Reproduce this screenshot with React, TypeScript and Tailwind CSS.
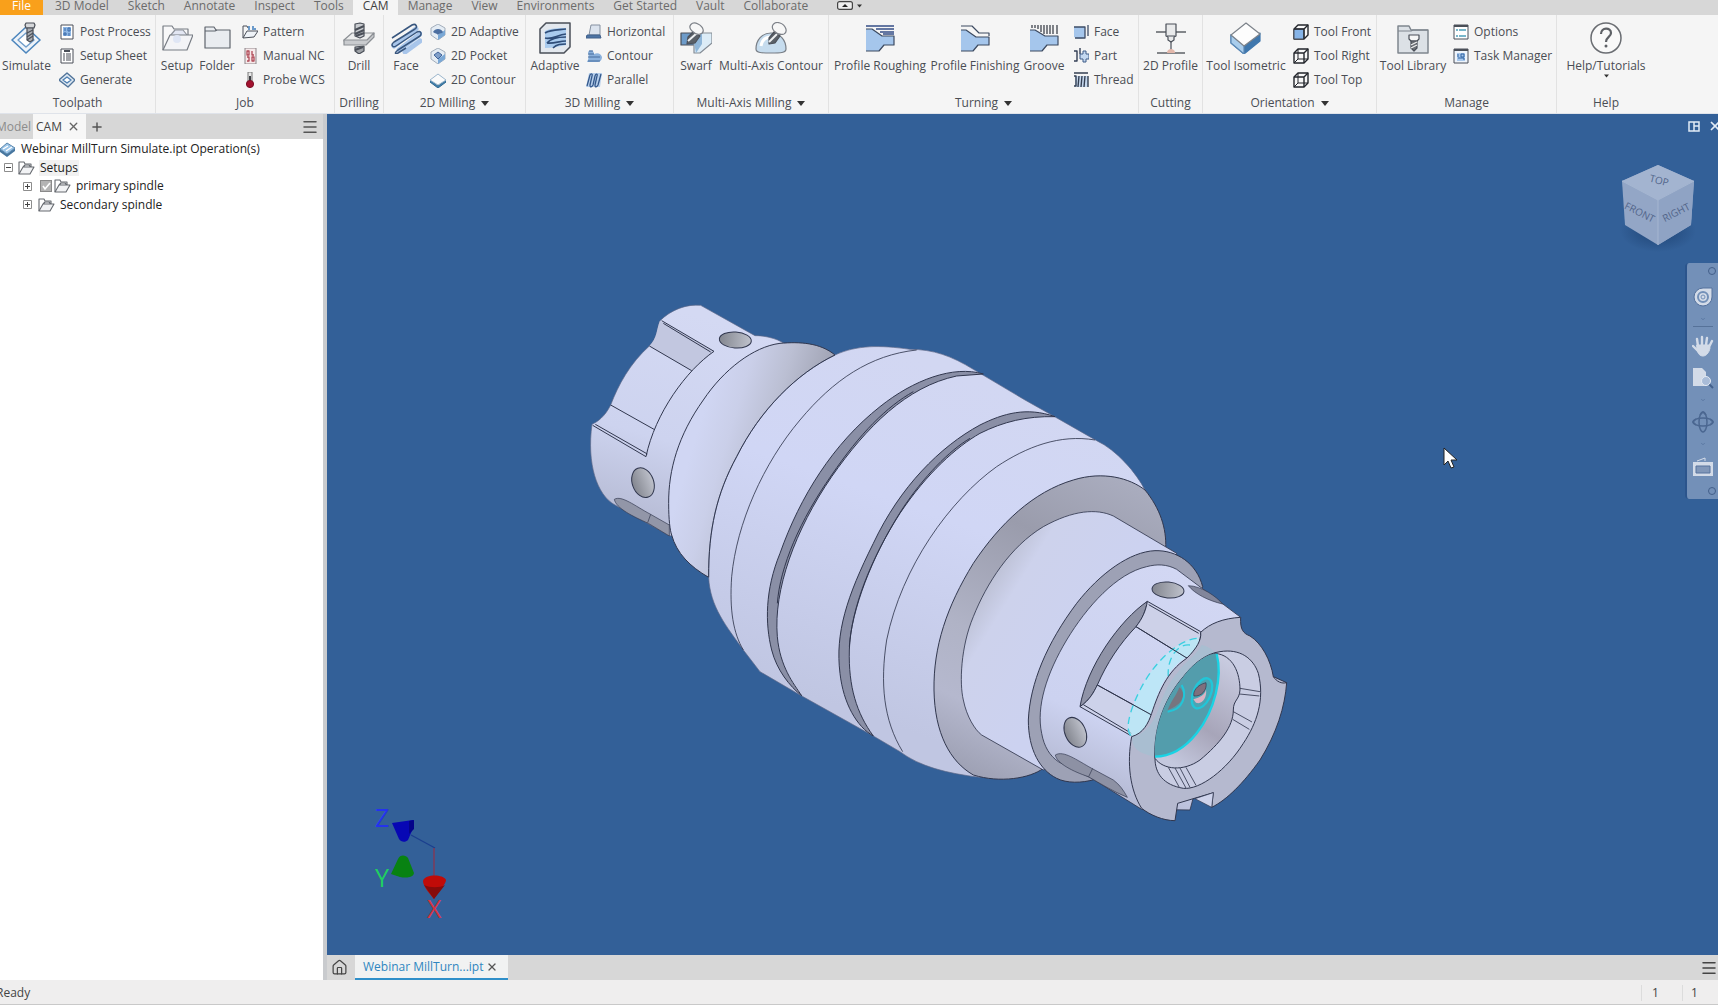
import type { ReactNode } from "react";
import { ChevronDown, House, Menu, Plus, X } from "lucide-react";

const INK = "#4a4f58";

const tabsBefore = ["3D Model", "Sketch", "Annotate", "Inspect", "Tools"];
const tabsAfter = ["Manage", "View", "Environments", "Get Started", "Vault", "Collaborate"];

/* ---------- icon frames ---------- */

function Big({ children }: { children: ReactNode }) {
  return (
    <svg width="32" height="32" viewBox="0 0 32 32" fill="none" stroke={INK} strokeWidth="1.2" strokeLinejoin="round" aria-hidden="true">
      {children}
    </svg>
  );
}

function Small({ children }: { children: ReactNode }) {
  return (
    <svg className="shrink-0" width="16" height="16" viewBox="0 0 16 16" fill="none" stroke={INK} strokeLinejoin="round" aria-hidden="true">
      {children}
    </svg>
  );
}

/* ---------- large icons ---------- */

const SimulateIcon = () => (
  <Big>
    <path d="M15 5 29 18 15 31 1 18Z" fill="#eef3f9" stroke="#4d86bd" strokeWidth="1.6" />
    <path d="M15 11 23 18 15 25 7 18Z" fill="#fff" stroke="#6f9dca" strokeWidth="1.4" />
    <path d="M15 1h8l1 2-1 3h-8l-1-3Z" fill="#d5d7da" />
    <path d="M16 6h6v12l-3 2-3-2Z" fill="#a9adb3" />
    <path d="m16 11 6-3m-6 7 6-4m-6 7 6-4" />
  </Big>
);

const SetupIcon = () => (
  <Big>
    <path d="M2 28V4h9l2 3h14v6" fill="#f8f8f9" stroke="#777c84" />
    <path d="M9 14l5-6h8l4 5v6H13Z" fill="#e3e7f3" stroke="#8f949c" />
    <path d="M2 28 9 13h23l-6 15Z" fill="#f3f4f7" stroke="#777c84" />
    <circle cx="16" cy="17" r="4" fill="#dfe6f5" stroke="none" />
  </Big>
);

const FolderIcon = () => (
  <Big>
    <path d="M4 26V5h9l2 3h14v18Z" fill="#e9ecf0" stroke="#5f646d" />
    <path d="M4 9h10l2-1" stroke="#5f646d" />
  </Big>
);

const DrillIcon = () => (
  <Big>
    <path d="M12 25v4l4 3 5-3v-5Z" fill="#9fa3a8" />
    <path d="M1 18 9 11h22l-7 8H1Z" fill="#eceded" stroke="#8b8f94" />
    <path d="M1 18v5h22l8-8v-4l-7 7Z" fill="#c9cbce" stroke="#8b8f94" />
    <path d="M12 2l5-1 4 1v12l-4 2-5-2Z" fill="#c9ccd0" />
    <path d="m12 8 9-4m-9 8 9-4m-8 6 8-3m-9 17 8-3" strokeWidth="2" />
  </Big>
);

const FaceIcon = () => (
  <Big>
    <path d="M4 24 26 7M9 28l21-16M15 30l15-11" stroke="#a8c5ea" strokeWidth="5" strokeLinecap="round" />
    <path d="M2 16 22 3c4-2 6 2 3 4L4 20c-4 3-1 6 2 4L27 10c4-2 5 2 3 4L8 28c-4 3-3 4 0 3l8-5" stroke="#39577f" strokeWidth="1.5" />
  </Big>
);

const AdaptiveIcon = () => (
  <Big>
    <path d="M7 1h24v24l-6 6H1V7Z" fill="#e3e8ee" strokeWidth="1.5" />
    <path d="M6 9c6-3 14-3 21-3v17c-6 1-14 3-21 3Z" fill="#a9cbee" stroke="none" />
    <path d="M6 11c6-4 14-3 21-4M6 16c7 2 12-3 21-4M8 21c4-5 11-6 19-6M8 21c7 1 12-2 19-2M14 26c4-4 8-4 13-4" stroke="#2f4d78" strokeWidth="1.7" />
  </Big>
);

const SwarfIcon = () => (
  <Big>
    <path d="M1 11h12l5 5-3 7H1Z" fill="#6d9bc9" />
    <path d="m14 20 8-9h10v10L20 31h-6Z" fill="#dcecf7" stroke="#858d96" />
    <path d="m14 20 8-9v11l-6 9Z" fill="#8fb6d9" stroke="none" />
    <path d="m8 15 6-6 6 5-5 7-8 1Z" fill="#5a6068" />
    <path d="m8 19 9-8" stroke="#eef0f2" strokeWidth="2" />
    <path d="M12 9C7 4 12-1 18 2s7 9 2 10c-3 1-5 0-8-3Z" fill="#f7f7f7" stroke="#7d8188" />
  </Big>
);

const MultiContourIcon = () => (
  <Big>
    <path d="M1 27c0-9 6-16 15-16s15 7 15 16c0 4-6 4-15 4S1 31 1 27Z" fill="#c6dcee" stroke="#777d85" />
    <path d="M6 24c1-6 5-9 10-9" stroke="#fff" strokeWidth="3" />
    <path d="m14 16 5-6 6 4-5 7-6 1Z" fill="#5a6068" />
    <path d="m14 20 8-8" stroke="#eef0f2" strokeWidth="2" />
    <path d="M19 9c-4-5 0-10 6-8s8 9 4 11c-3 1-7 0-10-3Z" fill="#f7f7f7" stroke="#7d8188" />
  </Big>
);

const RoughingIcon = () => (
  <Big>
    <path d="M2 7h6l10 7h12v9H20l-5 6H2Z" fill="#a5c6ec" stroke="none" />
    <path d="M2 7h6l10 7h12v9H20l-5 6H2" stroke="#3c4a60" />
    <path d="M2 4h28M12 7h18M16 10h14M19 12h11" stroke="#344e86" strokeWidth="1.4" />
  </Big>
);

const FinishingIcon = () => (
  <Big>
    <path d="M2 8h5l10 7h13v8H19l-5 6H2Z" fill="#a5c6ec" stroke="none" />
    <path d="M2 8h5l10 7h13v8H19l-5 6H2" stroke="#3c4a60" />
    <path d="M2 4h11l7 7h10v3" stroke="#3c4a60" />
  </Big>
);

const GrooveIcon = () => (
  <Big>
    <path d="M2 8h5l10 6h13v9H19l-5 6H2Z" fill="#a5c6ec" stroke="none" />
    <path d="M2 8h5l10 6h13v9H19l-5 6H2" stroke="#3c4a60" />
    <path d="M4 3v3M7 3v3M10 3v4M13 3v7M16 3v9M19 3v9M22 3v9M25 3v9M29 3v9" stroke="#3f444d" strokeWidth="1.3" />
  </Big>
);

const ProfileCutIcon = () => (
  <Big>
    <path d="M1 10h10m10 0h10M2 31h28" stroke="#5d6167" strokeWidth="1.5" />
    <path d="M11 2h10v12l-2 1v3l-3 2-3-2v-3l-2-1Z" fill="#e9eaeb" />
    <path d="M12 14h8M16 20v11" />
    <path d="M12 31c0-3 2-4 4-4s4 1 4 4" stroke="none" fill="#e3b8ab" />
  </Big>
);

const IsoIcon = () => (
  <Big>
    <path d="M1 13v8l13 11 16-13v-8L14 24Z" fill="#3f77ad" stroke="#3f77ad" />
    <path d="M1 13v8l13 11v-9Z" fill="#a9cdec" stroke="#5b88b5" />
    <path d="M16 1 30 12 14 24 1 13Z" fill="#fdfdfd" stroke="#7c828a" />
  </Big>
);

const LibraryIcon = () => (
  <Big>
    <path d="M1 31V4h11l2 4h17v23Z" fill="#dce1e6" stroke="#7f868e" strokeWidth="1.5" />
    <path d="M1 9h13l2-1h15" stroke="#7f868e" />
    <path d="M12 13h10v4l-2 2h-6l-2-2Z" fill="#f6f6f6" />
    <path d="M14 19h6v7l-3 3-3-3Z" fill="#6c7076" />
    <path d="m14 23 6-3m-6 6 6-3" stroke="#eee" />
  </Big>
);

const HelpIcon = () => (
  <Big>
    <circle cx="16" cy="16" r="15" fill="#f9f9f9" stroke="#6a6d72" strokeWidth="1.5" />
    <path d="M11 12c0-7 10-7 10-1 0 4-5 4-5 9" stroke="#5e6166" strokeWidth="2.2" />
    <circle cx="16" cy="24" r="1.5" fill="#5e6166" stroke="none" />
  </Big>
);

/* ---------- small icons ---------- */

const PostIcon = () => (
  <Small>
    <path d="M2 1h12v14H2Z" fill="#fff" />
    <path d="M4 3h8v9H4Z" fill="#8db6e4" stroke="none" />
    <path d="M6 4v3M9 4h2v3H9ZM5 9h2v2H5ZM10 9v3" stroke="#3868a8" />
  </Small>
);
const SheetIcon = () => (
  <Small>
    <path d="M2 1h12v14H2Z" fill="#fff" />
    <path d="M5 3h6" strokeWidth="2" />
    <path d="M4 6h2m1 0h5M4 8h2m1 0h5M4 10h2m1 0h5M4 12h2m1 0h5" />
  </Small>
);
const GenerateIcon = () => (
  <Small>
    <path d="M8 1 16 8 9 15 0 8Z" fill="#dfe9f2" stroke="#52759b" strokeWidth="1.4" />
    <path d="m8 5 4 3-4 3-4-3Z" fill="#fff" stroke="#4e7fb2" strokeWidth="1.4" />
  </Small>
);
const PatternIcon = () => (
  <Small>
    <path d="M1 14V2h4l1 2" />
    <path d="M1 14 5 7h11l-4 6Z" fill="#eef2f7" />
    <path d="M6 3h2m2 0h2M6 5h2m2 0h4" stroke="#3f7dbd" strokeWidth="1.5" />
  </Small>
);
const ManualIcon = () => (
  <Small>
    <path d="M3 0h11v16H3Z" fill="#f6e9ea" stroke="#8d8589" />
    <path d="M5 3h2v4H5ZM10 3v4h2M5 9h2v4H5M10 9h2v4h-2Z" stroke="#b04a56" strokeWidth="1.3" />
  </Small>
);
const ProbeIcon = () => (
  <Small>
    <path d="M6 0h4v10H6Z" fill="#e8e8e8" stroke="#777" />
    <path d="M8 4v8" stroke="#3d3f44" strokeWidth="2" />
    <circle cx="8" cy="12" r="3.6" fill="#a3122f" stroke="#7d1026" />
  </Small>
);
const Pocket = ({ adaptive }: { adaptive?: boolean }) => (
  <Small>
    <path d="M8 0 15 4v7l-7 5-7-5V4Z" fill="#e4ecf4" stroke="#a3aebb" />
    <path d="M8 16v-5l7-5v5Z" fill="#7aa8d6" stroke="none" />
    {adaptive ? (
      <path d="M3 8c2-4 8-4 10 0-1 2-4 1-5 3-1-2-3-1-5-3Z" fill="#4b6ea0" stroke="none" />
    ) : (
      <path d="m8 4 4 3-4 4-4-4Z" fill="#7f9fca" stroke="#41649a" />
    )}
  </Small>
);
const Contour2DIcon = () => (
  <Small>
    <path d="M0 8v2l8 6 8-6V8l-8 6Z" fill="#3d83b4" stroke="#33678d" />
    <path d="m8 2 8 6-8 5-8-5Z" fill="#fafafa" stroke="#9bb6cc" />
  </Small>
);
const HorizontalIcon = () => (
  <Small>
    <path d="M5 1h9v10H3Z" fill="#dbe3ee" stroke="#8590a0" />
    <path d="M1 11h13l1 3H0Z" fill="#4d74a5" stroke="#41618b" />
  </Small>
);
const Contour3DIcon = () => (
  <Small>
    <path d="M2 4c3-3 6-1 6 2 4-2 7 0 8 3 0 3-2 5-5 5H1c2-3 2-7 1-10Z" fill="#8bb1dc" stroke="none" />
    <path d="M3 3h4M2 6h6M2 9h12M2 13h12" stroke="#476d9d" />
  </Small>
);
const ParallelIcon = () => (
  <Small>
    <path d="M3 1h13l-2 14H0Z" fill="#b8d0ec" stroke="none" />
    <path d="M1 14 4 3c1-2 3-1 2 1L4 13c0 3 2 2 3 0L9 4c1-3 3-2 2 0L9 13c0 3 2 2 3 0l3-11" stroke="#35598c" strokeWidth="1.3" />
  </Small>
);
const TurnFaceIcon = () => (
  <Small>
    <path d="M1 3h11v10c-4 2-7 2-11 0Z" fill="#a5c6ec" stroke="none" />
    <path d="M1 3h11v11H2M15 1v11" stroke="#3d4c66" strokeWidth="1.3" />
  </Small>
);
const PartIcon = () => (
  <Small>
    <path d="M1 3h3v10H1M7 0v6" stroke="#333f55" strokeWidth="1.4" />
    <path d="M7 6h3V3h3v3h3v5h-3v3h-3v-3H7Z" fill="#c4d8f0" stroke="#3f5d88" />
  </Small>
);
const ThreadIcon = () => (
  <Small>
    <path d="M2 4h13v11H2Z" fill="#c6d8ee" stroke="none" />
    <path d="M1 1h14M1 4h2v10H1M6 4l-1 11M9 4 8 15M12 4l-1 11M15 4v11" stroke="#343f52" strokeWidth="1.4" />
  </Small>
);
const CubeIcon = ({ face }: { face: "front" | "right" | "top" }) => (
  <Small>
    <path d="M1 5 5 1h10v10l-4 4H1Z" fill="#f8f8f8" stroke="#22252b" strokeWidth="1.4" />
    {face === "front" && <path d="M1 5h10v10H1Z" fill="#86b4e8" />}
    {face !== "front" && <path d="M5 1v10h10M5 11l-4 4" stroke="#22252b" />}
    <path d="M1 5h10v10M11 5l4-4" stroke="#22252b" strokeWidth="1.4" />
  </Small>
);
const OptionsIcon = () => (
  <Small>
    <path d="M1 1h14v14H1Z" fill="#fff" />
    <path d="M1 2h14" strokeWidth="2" />
    <path d="M3 6h2m1 0h7M3 12h2m1 0h7" stroke="#4da0bb" strokeWidth="1.4" />
  </Small>
);
const TaskIcon = () => (
  <Small>
    <path d="M1 1h14v14H1Z" fill="#eef4fb" />
    <path d="M1 2h14" strokeWidth="2" />
    <path d="M4 5h8v8H4Z" fill="#a8c8ec" stroke="none" />
    <path d="M5 6v3M8 6h3v3H8ZM5 10h6v2" stroke="#2f62a2" />
  </Small>
);

/* ---------- ribbon ---------- */

function Caret({ small }: { small?: boolean }) {
  return (
    <svg width={small ? 5 : 8} height={small ? 4 : 5} viewBox="0 0 8 5" aria-hidden="true">
      <path d="M0 0h8L4 5Z" fill="#333" />
    </svg>
  );
}

function LargeButton({ icon, label, width, menu }: { icon: ReactNode; label: string; width: string; menu?: boolean }) {
  return (
    <button type="button" className={`${width} flex shrink-0 flex-col items-center pt-[7px]`}>
      {icon}
      <span className="mt-1 leading-4 whitespace-nowrap">{label}</span>
      {menu && <Caret small />}
    </button>
  );
}

function SmallButton({ icon, label }: { icon: ReactNode; label: string }) {
  return (
    <button type="button" className="flex h-6 items-center gap-[5px] whitespace-nowrap">
      {icon}
      {label}
    </button>
  );
}

function Group({ label, width, menu, children }: { label: string; width: string; menu?: boolean; children: ReactNode }) {
  return (
    <section aria-label={label} className={`${width} flex shrink-0 flex-col border-r border-[#e2e2e2]`}>
      <div className="flex flex-1 items-start">{children}</div>
      <div className="mb-0.5 flex h-4 items-center justify-center gap-1.5 whitespace-nowrap">
        {label}
        {menu && <Caret />}
      </div>
    </section>
  );
}

function Ribbon() {
  return (
    <div className="flex h-[99px] shrink-0 border-b border-[#dfe3ea] bg-[#f5f5f5] text-[#4a4d54]">
      <Group label="Toolpath" width="w-[156px]">
        <LargeButton icon={<SimulateIcon />} label="Simulate" width="w-[53px]" />
        <div className="ml-1.5 pt-[5px]">
          <SmallButton icon={<PostIcon />} label="Post Process" />
          <SmallButton icon={<SheetIcon />} label="Setup Sheet" />
          <SmallButton icon={<GenerateIcon />} label="Generate" />
        </div>
      </Group>
      <Group label="Job" width="w-[179px]">
        <LargeButton icon={<SetupIcon />} label="Setup" width="w-[42px]" />
        <LargeButton icon={<FolderIcon />} label="Folder" width="w-[38px]" />
        <div className="ml-1.5 pt-[5px]">
          <SmallButton icon={<PatternIcon />} label="Pattern" />
          <SmallButton icon={<ManualIcon />} label="Manual NC" />
          <SmallButton icon={<ProbeIcon />} label="Probe WCS" />
        </div>
      </Group>
      <Group label="Drilling" width="w-[49px]">
        <LargeButton icon={<DrillIcon />} label="Drill" width="w-12" />
      </Group>
      <Group label="2D Milling" width="w-[142px]" menu>
        <LargeButton icon={<FaceIcon />} label="Face" width="w-11" />
        <div className="ml-0.5 pt-[5px]">
          <SmallButton icon={<Pocket adaptive />} label="2D Adaptive" />
          <SmallButton icon={<Pocket />} label="2D Pocket" />
          <SmallButton icon={<Contour2DIcon />} label="2D Contour" />
        </div>
      </Group>
      <Group label="3D Milling" width="w-[148px]" menu>
        <LargeButton icon={<AdaptiveIcon />} label="Adaptive" width="w-[58px]" />
        <div className="ml-0.5 pt-[5px]">
          <SmallButton icon={<HorizontalIcon />} label="Horizontal" />
          <SmallButton icon={<Contour3DIcon />} label="Contour" />
          <SmallButton icon={<ParallelIcon />} label="Parallel" />
        </div>
      </Group>
      <Group label="Multi-Axis Milling" width="w-[155px]" menu>
        <LargeButton icon={<SwarfIcon />} label="Swarf" width="w-11" />
        <LargeButton icon={<MultiContourIcon />} label="Multi-Axis Contour" width="w-[106px]" />
      </Group>
      <Group label="Turning" width="w-[310px]" menu>
        <LargeButton icon={<RoughingIcon />} label="Profile Roughing" width="w-[102px]" />
        <LargeButton icon={<FinishingIcon />} label="Profile Finishing" width="w-[88px]" />
        <LargeButton icon={<GrooveIcon />} label="Groove" width="w-[50px]" />
        <div className="ml-1 pt-[5px]">
          <SmallButton icon={<TurnFaceIcon />} label="Face" />
          <SmallButton icon={<PartIcon />} label="Part" />
          <SmallButton icon={<ThreadIcon />} label="Thread" />
        </div>
      </Group>
      <Group label="Cutting" width="w-16">
        <LargeButton icon={<ProfileCutIcon />} label="2D Profile" width="w-[63px]" />
      </Group>
      <Group label="Orientation" width="w-[174px]" menu>
        <LargeButton icon={<IsoIcon />} label="Tool Isometric" width="w-[86px]" />
        <div className="ml-1 pt-[5px]">
          <SmallButton icon={<CubeIcon face="front" />} label="Tool Front" />
          <SmallButton icon={<CubeIcon face="right" />} label="Tool Right" />
          <SmallButton icon={<CubeIcon face="top" />} label="Tool Top" />
        </div>
      </Group>
      <Group label="Manage" width="w-[180px]">
        <LargeButton icon={<LibraryIcon />} label="Tool Library" width="w-[72px]" />
        <div className="ml-1 pt-[5px]">
          <SmallButton icon={<OptionsIcon />} label="Options" />
          <SmallButton icon={<TaskIcon />} label="Task Manager" />
        </div>
      </Group>
      <section aria-label="Help" className="flex w-[98px] shrink-0 flex-col">
        <div className="flex flex-1 items-start">
          <LargeButton icon={<HelpIcon />} label="Help/Tutorials" width="w-[98px]" menu />
        </div>
        <div className="mb-0.5 h-4 text-center">Help</div>
      </section>
    </div>
  );
}

function TabBar() {
  const tab = "flex items-center pr-[9px] pl-2.5 pb-1 whitespace-nowrap";
  return (
    <nav className="flex h-[15px] shrink-0 bg-[#d7d7d7] leading-[10px] text-[#6b6b6b]">
      <button type="button" className="mr-0.5 flex w-[43px] items-center justify-center bg-[#f9a01b] pb-1 text-white">File</button>
      {tabsBefore.map((t) => (
        <button key={t} type="button" className={tab}>{t}</button>
      ))}
      <button type="button" className={`${tab} bg-[#f5f5f5] text-[#3f3f3f]`}>CAM</button>
      {tabsAfter.map((t) => (
        <button key={t} type="button" className={tab}>{t}</button>
      ))}
      <button type="button" aria-label="Ribbon display" className="ml-5 flex items-center gap-1 pb-1">
        <svg width="16" height="9" viewBox="0 0 16 9" aria-hidden="true">
          <rect x=".6" y=".6" width="14.8" height="7.8" rx="2" fill="#eee" stroke="#444" strokeWidth="1.2" />
          <path d="M5 6h6L8 3Z" fill="#222" />
        </svg>
        <Caret small />
      </button>
    </nav>
  );
}

/* ---------- browser panel ---------- */

function Expander({ open }: { open?: boolean }) {
  return (
    <svg width="9" height="9" viewBox="0 0 9 9" fill="#fff" stroke="#8d8d8d" aria-hidden="true">
      <path d="M.5.5h8v8h-8Z" />
      <path d={open ? "M2 4.5h5" : "M2 4.5h5M4.5 2v5"} stroke="#444" />
    </svg>
  );
}

function OpenFolder() {
  return (
    <svg width="17" height="14" viewBox="0 0 17 14" fill="none" stroke="#666a70" strokeWidth="1.1" strokeLinejoin="round" aria-hidden="true">
      <path d="M1 13V1h5l1 2h6v3" />
      <path d="M1 13 5 6h11l-4 7ZM5 6l2-2h4l2 2" fill="#f2f3f5" />
    </svg>
  );
}

function BrowserPanel() {
  return (
    <aside className="flex w-[323px] shrink-0 flex-col bg-white">
      <div className="flex h-[25px] shrink-0 items-center bg-[#d7d7d7]">
        <button type="button" className="w-[33px] -indent-1 text-left text-[#8c8c8c]">Model</button>
        <div className="flex h-full w-[53px] items-center justify-between bg-[#f7f7f7] pr-1.5 pl-[3px] text-[#444]">
          <button type="button">CAM</button>
          <button type="button" aria-label="Close CAM"><X size={13} strokeWidth={2.5} color="#666" /></button>
        </div>
        <button type="button" aria-label="Add panel" className="ml-1"><Plus size={14} strokeWidth={2.5} color="#555" /></button>
        <button type="button" aria-label="Panel menu" className="mr-1 ml-auto"><Menu size={18} color="#555" /></button>
      </div>
      <ul className="pt-px text-[#222]">
        <li className="flex h-[18px] items-center gap-1.5">
          <svg width="15" height="15" viewBox="0 0 15 15" aria-hidden="true">
            <path d="M0 7v3l7 5 8-6V6l-8 6Z" fill="#47769f" />
            <path d="m7 1 8 5-8 6-7-5Z" fill="#9cc5e8" stroke="#5a87ae" />
            <path d="m3 7 5-3m-2 5 6-4" stroke="#fff" strokeWidth="1.4" />
          </svg>
          Webinar MillTurn Simulate.ipt Operation(s)
        </li>
        <li className="flex h-[19px] items-center pl-1">
          <Expander open />
          <span className="ml-[5px] flex items-center gap-1"><OpenFolder /><span className="bg-[#f1f1f1] px-px">Setups</span></span>
        </li>
        <li className="flex h-[18px] items-center pl-[23px]">
          <Expander />
          <label className="ml-2 flex items-center">
            <span className="relative flex">
              <input type="checkbox" defaultChecked className="h-3 w-3 appearance-none border border-[#8a8a8a] bg-[#b4b4b4]" />
              <svg className="pointer-events-none absolute inset-0" width="12" height="12" viewBox="0 0 12 12" fill="none" aria-hidden="true">
                <path d="m3 6 2 3 5-6" stroke="#fff" strokeWidth="1.6" />
              </svg>
            </span>
            <span className="ml-0.5 flex items-center gap-[5px]"><OpenFolder />primary spindle</span>
          </label>
        </li>
        <li className="flex h-[19px] items-center pl-[23px]">
          <Expander />
          <span className="ml-1.5 flex items-center gap-[5px]"><OpenFolder />Secondary spindle</span>
        </li>
      </ul>
    </aside>
  );
}

/* ---------- 3D view ---------- */

function Part() {
  return (
    <svg className="h-full w-full" viewBox="327 114 1391 841" preserveAspectRatio="xMidYMid slice" role="img" aria-label="Mill-turn part">
      <defs>
        <linearGradient id="body" gradientUnits="userSpaceOnUse" x1="1000" y1="200" x2="640" y2="1200">
          <stop offset="0" stopColor="#d2d7f2" />
          <stop offset=".4" stopColor="#d0d6f5" />
          <stop offset="1" stopColor="#c0c6e2" />
        </linearGradient>
        <linearGradient id="stub" gradientUnits="userSpaceOnUse" x1="300" y1="60" x2="120" y2="680">
          <stop offset="0" stopColor="#d4d9f3" />
          <stop offset=".6" stopColor="#cdd3ef" />
          <stop offset="1" stopColor="#b6bbd4" />
        </linearGradient>
        <linearGradient id="fillet" gradientUnits="userSpaceOnUse" x1="380" y1="330" x2="680" y2="420">
          <stop offset="0" stopColor="#d0d6f3" />
          <stop offset=".3" stopColor="#cacfe9" />
          <stop offset=".65" stopColor="#bbbfd3" />
          <stop offset="1" stopColor="#a4a7b8" />
        </linearGradient>
        <linearGradient id="ring" gradientUnits="userSpaceOnUse" x1="640" y1="230" x2="200" y2="1130">
          <stop offset="0" stopColor="#a9acbe" />
          <stop offset=".25" stopColor="#9a9cac" />
          <stop offset=".6" stopColor="#b0b3c6" />
          <stop offset=".8" stopColor="#b5b8ce" />
          <stop offset="1" stopColor="#9c9fb2" />
        </linearGradient>
        <linearGradient id="neck" gradientUnits="userSpaceOnUse" x1="300" y1="480" x2="590" y2="660">
          <stop offset="0" stopColor="#bcc0d4" />
          <stop offset=".25" stopColor="#cdd2ec" />
          <stop offset="1" stopColor="#ccd2f0" />
        </linearGradient>
        <linearGradient id="nose" gradientUnits="userSpaceOnUse" x1="850" y1="520" x2="560" y2="1180">
          <stop offset="0" stopColor="#d2d7f3" />
          <stop offset=".7" stopColor="#ccd2f0" />
          <stop offset="1" stopColor="#b2b7d0" />
        </linearGradient>
        <linearGradient id="hole" x1="0" y1="0" x2="1" y2="0">
          <stop offset="0" stopColor="#83868f" />
          <stop offset="1" stopColor="#bfc2cc" />
        </linearGradient>
        <linearGradient id="bore" gradientUnits="userSpaceOnUse" x1="1010" y1="800" x2="820" y2="1090">
          <stop offset="0" stopColor="#c8cbe0" />
          <stop offset=".6" stopColor="#a7a5b9" />
          <stop offset="1" stopColor="#c4c8de" />
        </linearGradient>
      </defs>

      {/* rear stub, fillet and barrel */}
      <g transform="translate(580 290) scale(.33333)" stroke="#30364d" strokeWidth="3" fill="none">
        <path d="M36 403C65 390 82 365 92 345C115 285 150 220 208 168C235 140 230 115 240 92C275 58 320 42 362 46L525 137C550 136 590 145 612 160L420 700L270 738L105 645C50 615 20 520 36 403Z" fill="url(#stub)" stroke="#5c6787" strokeWidth="2" />
        <path d="M240 92 402 184 335 242 208 168C232 145 230 115 240 92Z" fill="#c2c7e0" stroke="none" />
        <path d="M245 92 402 184C320 240 225 370 198 500L38 406M250 100 392 186M46 403 202 492M208 168 335 242M92 345 222 418" />
        <ellipse cx="466" cy="150" rx="48" ry="24" transform="rotate(4 466 150)" fill="url(#hole)" />
        <ellipse cx="189" cy="578" rx="32" ry="46" transform="rotate(-20 189 578)" fill="url(#hole)" />
        <path d="M103 628C125 615 165 648 210 672L268 705V738L205 700C160 680 108 655 103 628ZM212 673 203 698" fill="#9296a8" strokeWidth="2" />

        <path d="M600 160C520 170 430 240 370 330C295 435 265 540 266 640C266 690 270 720 275 735C290 790 330 830 386 862L700 700L765 195C720 158 660 155 600 160Z" fill="url(#fillet)" />

        <path d="M765 195C830 165 900 165 990 178C1060 178 1115 198 1180 238L1335 330L1415 375L1550 452C1610 480 1670 550 1695 600C1740 660 1760 730 1757 770L1500 1300L1200 1462C1100 1450 1020 1430 960 1385L880 1338L660 1215L540 1145L490 1080C440 1010 390 950 386 862C385 720 410 610 470 500C540 360 650 250 765 195Z" fill="url(#body)" stroke="#5c6787" strokeWidth="2" />
        <path d="M765 195C650 250 540 360 470 500C410 610 385 720 386 862" />
        <path d="M1010 180C870 195 760 270 660 390C550 520 470 700 455 860C448 960 460 1030 490 1080" strokeWidth="2.5" />
        <path d="M1210 252C1120 225 1000 270 900 350C760 460 660 620 600 790C555 900 555 1000 575 1080C590 1140 630 1190 665 1217C640 1180 600 1130 592 1040C580 900 645 720 755 560C860 410 980 290 1130 258Z" fill="#8a8fa6" />
        <path d="M592 940C600 830 660 690 755 555C840 430 920 350 1000 305" />
        <path d="M1425 380C1340 350 1270 370 1200 405C1080 470 960 590 880 760C800 920 765 1030 780 1150C790 1240 830 1310 880 1338C830 1270 805 1190 808 1080C812 960 870 810 960 670C1040 550 1130 470 1200 430C1270 395 1340 378 1425 380Z" fill="#8a8fa6" />
        <path d="M808 1070C815 960 875 800 965 660C1030 560 1110 480 1170 445" />
        <path d="M1545 450C1440 432 1340 470 1250 530C1110 630 965 830 920 1050C900 1180 910 1290 968 1385" strokeWidth="2.5" />
      </g>

      {/* shoulder, neck and nose */}
      <g transform="translate(900 400) scale(.33333)" stroke="#30364d" strokeWidth="3" fill="none">
        <path d="M735 270C690 235 610 212 520 240C400 275 300 370 220 490C140 620 100 740 102 870C104 1000 150 1085 220 1125C300 1150 390 1135 430 1105L797 445C800 385 780 325 735 270Z" fill="url(#ring)" />
        <path d="M640 348C590 325 520 330 430 380C330 440 260 550 220 650C182 740 178 850 190 900C200 950 225 990 245 1005L430 1110L700 900L830 460Z" fill="url(#neck)" strokeWidth="2.5" />
        <path d="M908 560C890 490 830 450 765 452C690 455 600 520 530 610C440 730 390 850 385 960C385 1050 420 1110 470 1135C500 1150 545 1150 585 1138Z" fill="#9da1b5" />
        <path d="M830 508C800 492 770 492 740 500C650 520 560 620 500 720C440 820 408 920 425 1000C432 1040 450 1068 475 1085L575 1135L725 1228L870 1230L1022 652Z" fill="url(#nose)" strokeWidth="2.5" />
        <ellipse cx="804" cy="570" rx="48" ry="24" transform="rotate(5 804 570)" fill="url(#hole)" />
        <ellipse cx="526" cy="997" rx="31" ry="47" transform="rotate(-24 526 997)" fill="url(#hole)" />
        <path d="M865 557C905 558 950 590 968 612C925 602 885 582 865 557Z" fill="#82869b" strokeWidth="2" />
        <path d="M466 1065C490 1050 530 1080 575 1105L640 1140C660 1155 670 1170 682 1192C640 1175 600 1150 565 1130C520 1115 470 1090 466 1065ZM578 1105 566 1130" fill="#8d91a4" strokeWidth="2" />

        {/* pocket */}
        <path d="M742 604C660 660 560 800 540 920C570 900 582 875 592 855C620 790 660 730 708 680C728 655 738 630 742 604Z" fill="#8f93a7" />
        <path d="M742 604 902 695C905 725 885 750 862 775L708 680C728 655 738 630 742 604Z" fill="#cdd1e8" />
        <path d="M592 855 755 945C745 975 730 1000 698 1010L540 920C570 900 582 875 592 855Z" fill="#cdd2ea" />
        <path d="M746 614 896 700M550 914 694 1000" />

        {/* selected bore seen through the wall */}
        <path d="M895 712C830 720 760 790 720 870C690 930 670 990 695 1012C740 1000 745 960 765 905C785 845 815 795 870 765C895 745 900 735 895 712Z" fill="#b3f0fa" fillOpacity=".65" stroke="none" />
        <path d="M890 715C830 722 760 790 720 870C690 930 672 990 695 1010M870 735C830 730 800 780 805 830" stroke="#3ccfe0" strokeWidth="4" strokeDasharray="22 14" />
        <path d="M592 855 755 945M708 680 862 775" />

        {/* end face */}
        <path d="M1022 652C1020 690 1030 700 1050 708C1085 730 1112 780 1120 830L1160 848C1155 920 1130 1000 1080 1080C1030 1150 980 1200 935 1222L940 1178 833 1210 825 1262C790 1262 750 1245 725 1225C690 1170 680 1090 695 1010C730 1000 745 970 755 940C775 880 800 815 860 775C890 745 905 720 902 697C930 670 970 655 1022 652Z" fill="#b5b9cf" />
        <path d="M885 1196 940 1178 935 1222Z" fill="#ced3eb" strokeWidth="2" />
        <path d="M1120 830C1130 845 1145 852 1160 848" />
        <path d="M905 735C890 765 850 790 835 815C790 860 780 930 760 960C745 990 720 1005 697 1012C695 1040 710 1060 765 1070C760 990 790 900 850 830C880 790 920 762 945 760C935 745 920 738 905 735Z" fill="#9fc3d4" fillOpacity=".55" stroke="none" />
        <path d="M765 1075C760 990 790 900 850 830C880 790 920 760 960 755C1020 745 1060 775 1075 820C1095 900 1070 970 1030 1030C980 1110 900 1170 850 1165C790 1155 765 1120 765 1075Z" fill="#c9cde3" />
        <path d="M765 1075C790 1110 850 1115 900 1080C960 1030 1000 980 1000 930C1000 900 1018 900 1020 870C1020 820 1000 765 945 760C900 770 760 900 765 1075Z" fill="url(#bore)" />
        <path d="M1020 865 1080 875M1018 882 1078 888M1000 935 1056 966M998 958 1048 988M805 1102 838 1162M825 1104 858 1164M840 1104 870 1162M858 1102 888 1156" strokeWidth="2.5" />
        <path d="M765 1070C760 990 790 900 850 830C880 790 920 762 950 760C968 830 945 930 890 1000C850 1050 805 1070 765 1070Z" fill="#539dac" stroke="none" />
        <path d="M950 762C968 830 945 930 890 1000C850 1050 805 1070 765 1070" stroke="#19d3e4" strokeWidth="7" />
        <path d="M838 862C860 880 850 915 803 930C815 900 830 885 838 862Z" fill="#77757f" stroke="none" />
        <path d="M845 855C862 885 850 930 803 935" stroke="#22c6d8" strokeWidth="6" />
        <ellipse cx="906" cy="880" rx="26" ry="48" transform="rotate(24 906 880)" stroke="#22c6d8" strokeWidth="7" fill="#4ba5b4" />
        <path d="M918 848C890 855 878 875 882 888C905 890 922 870 918 848Z" fill="#7f6f7d" strokeWidth="2" />
        <path d="M880 898C900 892 915 885 918 868C922 895 905 915 888 908Z" fill="#d9b3c3" stroke="none" />
      </g>

      {/* pointer */}
      <path d="M1444 448v17l4-4 3 7 3-1-3-7h6Z" fill="#fff" stroke="#222" />
    </svg>
  );
}

function ViewCube() {
  return (
    <svg className="absolute top-[45px] right-[20px]" width="80" height="96" viewBox="0 0 80 96" role="img" aria-label="View cube">
      <defs>
        <radialGradient id="cubeShadow">
          <stop offset="0" stopColor="#1f4475" />
          <stop offset="1" stopColor="#1f4475" stopOpacity="0" />
        </radialGradient>
      </defs>
      <ellipse cx="40" cy="72" rx="38" ry="21" fill="url(#cubeShadow)" />
      <path d="M40 6 76 22 73 66 40 86 7 66 4 22Z" fill="#93a6c6" />
      <path d="M40 6 76 22 40 41 4 22Z" fill="#a3b4d0" />
      <path d="M40 41 76 22 73 66 40 86Z" fill="#8fa3c4" />
      <path d="M4 22 40 41 76 22M40 41V86" fill="none" stroke="#a5b6d1" />
      <g fontSize="10" fill="#52658a" textAnchor="middle">
        <text x="41" y="25" transform="rotate(14 41 22)">TOP</text>
        <text x="22" y="57" transform="rotate(27 22 53)">FRONT</text>
        <text x="58" y="57" transform="rotate(-27 58 53)">RIGHT</text>
      </g>
    </svg>
  );
}

function Triad() {
  return (
    <svg className="absolute bottom-[30px] left-[40px]" width="90" height="122" viewBox="0 0 90 122" role="img" aria-label="Axis triad">
      <path d="m44 32 24 13" stroke="#1b3f8e" strokeWidth="1.3" />
      <path d="M67 45v30" stroke="#8a3550" strokeWidth="1.3" />
      <path d="m25 20 21-3 1 6-6 14c-3 3-7 2-9-1Z" fill="#0707b4" />
      <path d="m42 18 5-1v9l-5 5Z" fill="#04048a" />
      <path d="M24 71 31 56c2-5 8-4 10-1l6 15c-1 5-8 5-14 4Z" fill="#088212" />
      <path d="M56 78c2-7 20-7 23-1 0 4-8 12-12 19-5-6-11-13-11-18Z" fill="#c00b08" />
      <path d="M57 82c6 3 16 3 21 0L67 96Z" fill="#860b0b" />
      <g fontSize="25">
        <text x="8" y="24" fill="#2432f0">Z</text>
        <text x="8" y="84" fill="#1fd060">Y</text>
        <text x="60" y="115" fill="#d5333f">X</text>
      </g>
    </svg>
  );
}

function NavBar() {
  return (
    <div className="absolute top-[149px] right-0 flex h-[236px] w-[33px] flex-col items-center rounded-l border-l-2 border-[#2b548c] bg-[#7390b8] text-[#d3dbe8]">
      <span className="mt-1 mr-0.5 h-2 w-2 self-end rounded-full border border-[#435f8a]" />
      <button type="button" aria-label="Navigation wheel" className="mt-[11px]">
        <svg width="22" height="22" viewBox="0 0 22 22" fill="none" stroke="currentColor">
          <path d="M11 2h9v9a9 9 0 1 1-9-9Z" fill="currentColor" stroke="#56729d" />
          <circle cx="11" cy="11" r="5" stroke="#7390b8" strokeWidth="2" />
          <circle cx="11" cy="11" r="2" stroke="#7390b8" />
        </svg>
      </button>
      <ChevronDown className="mt-2" size={6} color="#43608d" />
      <span className="mt-1 h-px w-5 bg-[#567299]" />
      <button type="button" aria-label="Pan" className="mt-2">
        <svg width="22" height="22" viewBox="0 0 22 22" fill="none" stroke="currentColor" strokeLinecap="round">
          <path d="M6 11 5 4M10 10V2M14 10l1-7M17 12l3-6M6 16l-5-5" strokeWidth="2.4" />
          <path d="M5 10h12l1 3c-1 5-4 8-7 8s-5-2-6-6Z" fill="currentColor" />
        </svg>
      </button>
      <button type="button" aria-label="Zoom" className="mt-2.5">
        <svg width="22" height="22" viewBox="0 0 22 22">
          <path d="M1 1h9l4 4v14H1Z" fill="currentColor" />
          <path d="m17 17 4 4" stroke="#43608d" strokeWidth="2" />
          <circle cx="14" cy="14" r="4.5" fill="#a9bcd8" stroke="#e4eaf3" />
        </svg>
      </button>
      <ChevronDown className="mt-2" size={6} color="#43608d" />
      <button type="button" aria-label="Orbit" className="mt-2">
        <svg width="22" height="22" viewBox="0 0 22 22" fill="none" stroke="#4b6791" strokeWidth="1.5">
          <ellipse cx="11" cy="11" rx="10" ry="4" />
          <ellipse cx="11" cy="11" rx="4" ry="10" />
          <path d="m8 4 3-3 3 3M4 8l-3 3 3 3M18 8l3 3-3 3" />
        </svg>
      </button>
      <ChevronDown className="mt-2" size={6} color="#43608d" />
      <button type="button" aria-label="Look at" className="mt-2.5">
        <svg width="22" height="20" viewBox="0 0 22 20">
          <path d="m5 4 8-3v3" fill="none" stroke="currentColor" />
          <path d="M1 5h20v14H1Z" fill="currentColor" />
          <path d="M4 9h14v7H4Z" fill="#8197b9" stroke="#56729d" />
        </svg>
      </button>
      <span className="mt-auto mr-0.5 mb-1 h-2 w-2 self-end rounded-full border border-[#435f8a]" />
    </div>
  );
}

function Viewport() {
  return (
    <main className="flex min-w-0 flex-1 flex-col">
      <div className="relative min-h-0 flex-1 overflow-hidden bg-[#336098]">
        <Part />
        <div className="absolute top-[5px] -right-1 flex items-center gap-2 text-[#e2ebf6]">
          <button type="button" aria-label="Tile windows">
            <svg width="12" height="11" viewBox="0 0 12 11" fill="none" stroke="currentColor" strokeWidth="1.5">
              <path d="M1 1h10v9H1ZM6 1v9M6 5h5" />
            </svg>
          </button>
          <button type="button" aria-label="Close view"><X size={14} strokeWidth={3} /></button>
        </div>
        <ViewCube />
        <NavBar />
        <Triad />
      </div>
      <div className="flex h-[25px] shrink-0 items-center bg-[#d7d7d7]">
        <button type="button" aria-label="Home" className="w-7 pl-1"><House size={17} strokeWidth={1.7} color="#444" /></button>
        <div className="flex h-full w-[153px] items-center justify-between border-b-2 border-[#2f8fc9] bg-[#f1f2f2] pr-2.5 pl-2 text-[#2f86c0]">
          <button type="button">Webinar MillTurn...ipt</button>
          <button type="button" aria-label="Close document"><X size={12} strokeWidth={2.5} color="#555" /></button>
        </div>
        <button type="button" aria-label="Document list" className="ml-auto"><Menu size={18} color="#444" /></button>
      </div>
    </main>
  );
}

export default function App() {
  return (
    <div className="flex h-screen flex-col overflow-hidden bg-[#efefef] font-['Open_Sans','Noto_Sans',sans-serif] text-[12px] leading-4">
      <TabBar />
      <Ribbon />
      <div className="flex min-h-0 flex-1">
        <BrowserPanel />
        <div className="w-1 shrink-0 bg-[#c9cbce]" />
        <Viewport />
      </div>
      <footer className="flex h-[25px] shrink-0 items-center border-b border-[#c9c9c9] bg-[#efeeee] pt-0.5 text-[#444]">
        <span className="-ml-1">Ready</span>
        <span className="ml-auto w-[41px] border-l border-[#dcdcdc] pl-2.5">1</span>
        <span className="w-9 border-l border-[#dcdcdc] pl-2">1</span>
      </footer>
    </div>
  );
}
